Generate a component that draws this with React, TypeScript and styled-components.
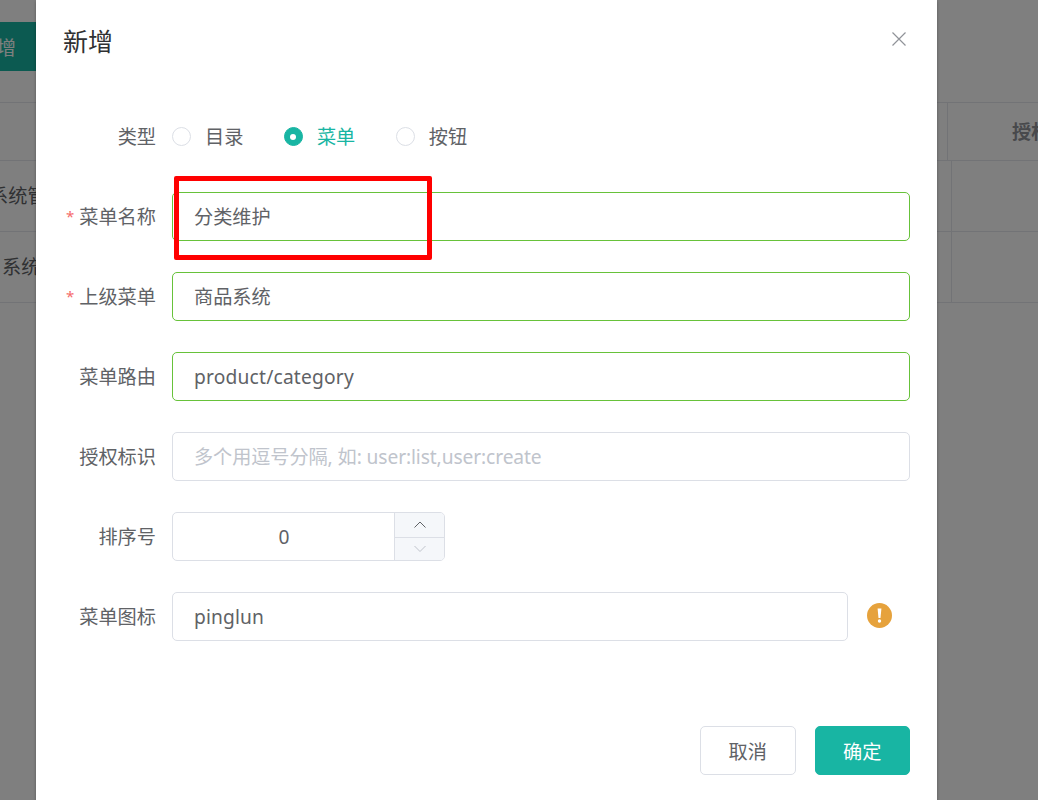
import styled, { createGlobalStyle } from 'styled-components';

const GlobalStyle = createGlobalStyle`
  html, body {
    margin: 0;
    padding: 0;
    height: 100%;
    overflow: hidden;
  }
  body {
    font-family: 'Noto Sans', 'Noto Sans CJK SC', sans-serif;
    color: #606266;
  }
  * {
    box-sizing: border-box;
  }
`;

const Page = styled.div`
  position: relative;
  width: 1038px;
  height: 800px;
  overflow: hidden;
  background: #fff;
`;

const Toolbar = styled.div`
  display: flex;
  height: 102px;
  padding-top: 22px;
`;

const AddButton = styled.div`
  display: flex;
  align-items: center;
  justify-content: flex-end;
  width: 36px;
  height: 49px;
  padding-right: 20px;
  white-space: nowrap;
  background: #18b5a3;
  color: #fff;
  font-size: 19.2px;
`;

const Table = styled.div`
  border-top: 1px solid #e4e7ed;
`;

const TableRow = styled.div<{ $height: number; $split: number }>`
  display: grid;
  grid-template-columns: ${(p) => p.$split}px 1fr;
  height: ${(p) => p.$height}px;
  border-bottom: 1px solid #e4e7ed;
`;

const FirstCell = styled.div<{ $indent?: number }>`
  display: flex;
  align-items: center;
  padding-bottom: 2px;
  overflow: hidden;
  font-size: 19.2px;
  white-space: nowrap;

  & > span {
    margin-left: ${(p) => p.$indent ?? 0}px;
  }
`;

const LastCell = styled.div`
  display: flex;
  align-items: center;
  padding: 0 0 2px 64px;
  border-left: 1px solid #e4e7ed;
  overflow: hidden;
  white-space: nowrap;
  font-size: 19.2px;
  font-weight: 700;
  color: #909399;
`;

const Overlay = styled.div`
  position: absolute;
  inset: 0;
  background: rgba(0, 0, 0, 0.5);
`;

const Dialog = styled.div`
  position: relative;
  width: 901px;
  height: 830px;
  margin-left: 36px;
  background: #fff;
  box-shadow: 0 1px 3px rgba(0, 0, 0, 0.3);
`;

const DialogHeader = styled.div`
  display: flex;
  align-items: center;
  justify-content: space-between;
  height: 112px;
  padding: 0 30px 30px 27px;
`;

const Title = styled.span`
  font-size: 25px;
  color: #303133;
  line-height: 82px;
`;

const CloseIcon = styled.svg`
  width: 16px;
  height: 16px;
  margin-top: -4px;
  color: #909399;
`;

const Form = styled.div`
  display: flex;
  flex-direction: column;
  gap: 31px;
  padding-right: 27px;
`;

const FormRow = styled.div`
  display: grid;
  grid-template-columns: 136px 1fr;
  height: 49px;
`;

const Label = styled.div`
  display: flex;
  align-items: center;
  justify-content: flex-end;
  padding: 0 16px 2px 0;
  font-size: 19.2px;
  color: #606266;
`;

const Star = styled.span`
  margin-right: 5px;
  color: #f56c6c;
  font-size: 15px;
`;

const RadioGroup = styled.div`
  display: flex;
  align-items: center;
  gap: 40.5px;
`;

const RadioItem = styled.div`
  display: flex;
  align-items: center;
  gap: 14px;
`;

const RadioCircle = styled.span<{ $checked?: boolean }>`
  display: flex;
  align-items: center;
  justify-content: center;
  width: 19px;
  height: 19px;
  border-radius: 50%;
  border: 1px solid ${(p) => (p.$checked ? '#18b5a3' : '#dcdfe6')};
  background: ${(p) => (p.$checked ? '#18b5a3' : '#fff')};

  &::after {
    content: '';
    width: 6px;
    height: 6px;
    border-radius: 50%;
    background: #fff;
  }
`;

const RadioText = styled.span<{ $checked?: boolean }>`
  padding-bottom: 2px;
  font-size: 19.2px;
  color: ${(p) => (p.$checked ? '#18b5a3' : '#606266')};
`;

const Field = styled.div<{ $valid?: boolean; $placeholder?: boolean; $cjk?: boolean; $spacing?: number }>`
  display: flex;
  align-items: center;
  height: 49px;
  padding: 0 21px ${(p) => (p.$cjk ? '2px' : '0')};
  border: 1px solid ${(p) => (p.$valid ? '#67c23a' : '#dcdfe6')};
  border-radius: 5px;
  background: #fff;
  font-size: 19.2px;
  letter-spacing: ${(p) => p.$spacing ?? 0}px;
  color: ${(p) => (p.$placeholder ? '#c0c4cc' : '#606266')};
`;

const NumberBox = styled.div`
  display: grid;
  grid-template-columns: 1fr 50px;
  width: 273px;
  height: 49px;
  border: 1px solid #dcdfe6;
  border-radius: 5px;
  overflow: hidden;
`;

const NumberValue = styled.div`
  display: flex;
  align-items: center;
  justify-content: center;
  padding-left: 1px;
  font-size: 19.2px;
`;

const Stepper = styled.div`
  display: grid;
  grid-template-rows: 1fr 1fr;
  border-left: 1px solid #dcdfe6;
  background: #f5f7fa;
`;

const StepButton = styled.div<{ $disabled?: boolean }>`
  display: flex;
  align-items: center;
  justify-content: center;
  color: ${(p) => (p.$disabled ? '#c0c4cc' : '#606266')};

  & + & {
    border-top: 1px solid #dcdfe6;
  }
`;

const IconRow = styled.div`
  display: flex;
  align-items: center;
`;

const IconField = styled(Field)`
  width: 676px;
`;

const WarnIcon = styled.svg`
  width: 25px;
  height: 25px;
  margin: -3px 0 0 19px;
`;

const Footer = styled.div`
  display: flex;
  justify-content: flex-end;
  gap: 19px;
  margin-top: 85px;
  padding-right: 27px;
`;

const Button = styled.div<{ $primary?: boolean }>`
  display: flex;
  align-items: center;
  justify-content: center;
  width: 95.5px;
  height: 49px;
  border: 1px solid ${(p) => (p.$primary ? '#18b5a3' : '#dcdfe6')};
  border-radius: 5px;
  background: ${(p) => (p.$primary ? '#18b5a3' : '#fff')};
  color: ${(p) => (p.$primary ? '#fff' : '#606266')};
  font-size: 19.2px;
`;

const Annotation = styled.div`
  position: absolute;
  left: 138px;
  top: 176px;
  width: 258px;
  height: 84px;
  border: 5px solid #ff0000;
  border-radius: 2px;
`;

const Chevron = ({ up }: { up?: boolean }) => (
  <svg width="18" height="10" viewBox="0 0 18 10" fill="none" stroke="currentColor" strokeWidth="1">
    <path d={up ? 'M3.5 7.5 9 2l5.5 5.5' : 'M3.5 2 9 7.5 14.5 2'} />
  </svg>
);

export default function App() {
  return (
    <Page>
      <GlobalStyle />
      <Toolbar>
        <AddButton>新增</AddButton>
      </Toolbar>
      <Table>
        <TableRow $height={58} $split={947}>
          <FirstCell />
          <LastCell>授权标识</LastCell>
        </TableRow>
        <TableRow $height={71} $split={951}>
          <FirstCell $indent={-11}>
            <span>系统管理</span>
          </FirstCell>
          <LastCell />
        </TableRow>
        <TableRow $height={71} $split={951}>
          <FirstCell $indent={2}>
            <span>系统</span>
          </FirstCell>
          <LastCell />
        </TableRow>
      </Table>
      <Overlay>
        <Dialog>
          <DialogHeader>
            <Title>新增</Title>
            <CloseIcon viewBox="0 0 16 16" fill="none" stroke="currentColor" strokeWidth="1.2">
              <path d="M1.5 1.5l13 13M14.5 1.5l-13 13" />
            </CloseIcon>
          </DialogHeader>
          <Form>
            <FormRow>
              <Label>类型</Label>
              <RadioGroup>
                <RadioItem>
                  <RadioCircle />
                  <RadioText>目录</RadioText>
                </RadioItem>
                <RadioItem>
                  <RadioCircle $checked />
                  <RadioText $checked>菜单</RadioText>
                </RadioItem>
                <RadioItem>
                  <RadioCircle />
                  <RadioText>按钮</RadioText>
                </RadioItem>
              </RadioGroup>
            </FormRow>
            <FormRow>
              <Label>
                <Star>*</Star>菜单名称
              </Label>
              <Field $valid $cjk>分类维护</Field>
            </FormRow>
            <FormRow>
              <Label>
                <Star>*</Star>上级菜单
              </Label>
              <Field $valid $cjk>商品系统</Field>
            </FormRow>
            <FormRow>
              <Label>菜单路由</Label>
              <Field $valid $spacing={0.2}>product/category</Field>
            </FormRow>
            <FormRow>
              <Label>授权标识</Label>
              <Field $placeholder $cjk $spacing={-0.1}>多个用逗号分隔, 如: user:list,user:create</Field>
            </FormRow>
            <FormRow>
              <Label>排序号</Label>
              <NumberBox>
                <NumberValue>0</NumberValue>
                <Stepper>
                  <StepButton>
                    <Chevron up />
                  </StepButton>
                  <StepButton $disabled>
                    <Chevron />
                  </StepButton>
                </Stepper>
              </NumberBox>
            </FormRow>
            <FormRow>
              <Label>菜单图标</Label>
              <IconRow>
                <IconField $spacing={0.15}>pinglun</IconField>
                <WarnIcon viewBox="0 0 25 25">
                  <circle cx="12.5" cy="12.5" r="12.5" fill="#e6a23c" />
                  <path d="M10.6 5.5h3.8l-.9 9.5h-2z" fill="#fff" />
                  <circle cx="12.5" cy="18" r="1.7" fill="#fff" />
                </WarnIcon>
              </IconRow>
            </FormRow>
          </Form>
          <Footer>
            <Button>取消</Button>
            <Button $primary>确定</Button>
          </Footer>
          <Annotation />
        </Dialog>
      </Overlay>
    </Page>
  );
}
